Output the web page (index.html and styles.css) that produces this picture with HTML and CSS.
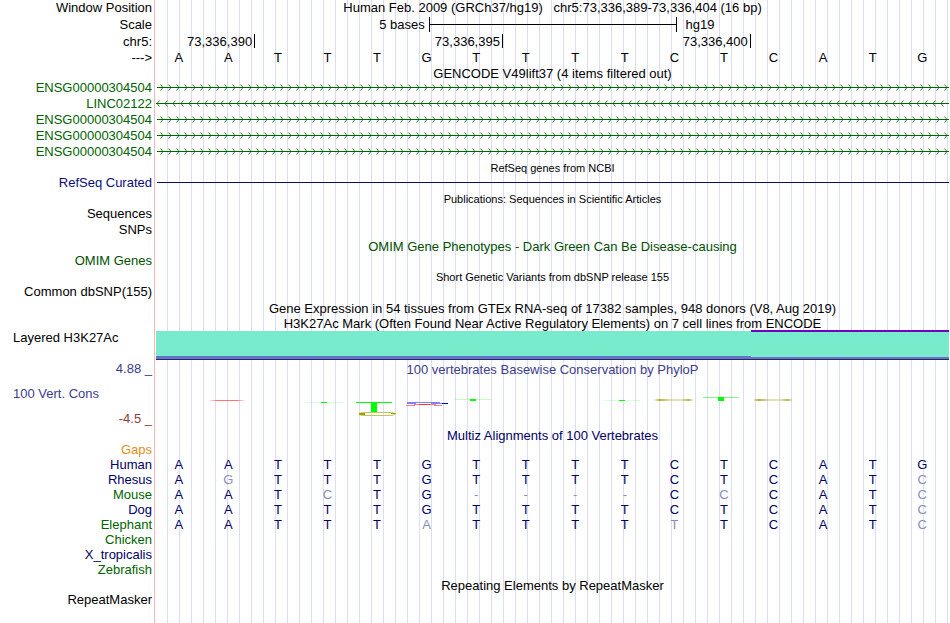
FILE: index.html
```html
<!DOCTYPE html>
<html lang="en">

<head>
    <meta charset="UTF-8">
    <meta name="viewport" content="width=device-width, initial-scale=1.0">
    <title>Human hg19 chr5:73,336,389-73,336,404</title>

    <link rel="stylesheet" href="styles.css">
</head>

<body>
    <main class="browser">
        <!-- ruler -->
        <div class="row ruler">
            <div class="label">Window Position</div>
            <div class="data position">Human Feb. 2009 (GRCh37/hg19)   chr5:73,336,389-73,336,404 (16 bp)</div>
        </div>
        <div class="row ruler">
            <div class="label">Scale</div>
            <div class="data scale">
                <span class="scale-size">5 bases</span>
                <span class="scale-bar"></span>
                <span class="scale-db">hg19</span>
            </div>
        </div>
        <div class="row">
            <div class="label">chr5:</div>
            <div class="data ticks">
                <span class="tick first">73,336,390</span>
                <span class="tick">73,336,395</span>
                <span class="tick">73,336,400</span>
            </div>
        </div>
        <div class="row short">
            <div class="label">---&gt;</div>
            <div class="data bases">
                <span>A</span><span>A</span><span>T</span><span>T</span><span>T</span><span>G</span><span>T</span><span>T</span><span>T</span><span>T</span><span>C</span><span>T</span><span>C</span><span>A</span><span>T</span><span>G</span>
            </div>
        </div>

        <!-- genes -->
        <div class="title">GENCODE V49lift37 (4 items filtered out)</div>
        <div class="row green">
            <div class="label">ENSG00000304504</div>
            <svg class="data gene">
                <defs>
                    <pattern id="forward" width="8" height="16" patternUnits="userSpaceOnUse">
                        <path d="M4.500 4.500L7 7.500L4.500 10.500" />
                    </pattern>
                    <pattern id="reverse" width="8" height="16" patternUnits="userSpaceOnUse">
                        <path d="M3.500 4.500L1 7.500L3.500 10.500" />
                    </pattern>
                </defs>
                <rect class="intron" x="1" y="7" width="100%" height="1" />
                <rect width="100%" height="16" fill="url(#forward)" />
            </svg>
        </div>
        <div class="row green">
            <div class="label">LINC02122</div>
            <svg class="data gene">
                <rect class="intron" y="7" width="100%" height="1" />
                <rect width="100%" height="16" fill="url(#reverse)" />
            </svg>
        </div>
        <div class="row green">
            <div class="label">ENSG00000304504</div>
            <svg class="data gene">
                <rect class="intron" x="1" y="7" width="100%" height="1" />
                <rect width="100%" height="16" fill="url(#forward)" />
            </svg>
        </div>
        <div class="row green">
            <div class="label">ENSG00000304504</div>
            <svg class="data gene">
                <rect class="intron" x="1" y="7" width="100%" height="1" />
                <rect width="100%" height="16" fill="url(#forward)" />
            </svg>
        </div>
        <div class="row green">
            <div class="label">ENSG00000304504</div>
            <svg class="data gene">
                <rect class="intron" x="1" y="7" width="100%" height="1" />
                <rect width="100%" height="16" fill="url(#forward)" />
            </svg>
        </div>

        <div class="title small">RefSeq genes from NCBI</div>
        <div class="row blue">
            <div class="label">RefSeq Curated</div>
            <svg class="data gene">
                <rect class="refseq" x="1" y="7" width="100%" height="1" />
            </svg>
        </div>

        <div class="title small">Publications: Sequences in Scientific Articles</div>
        <div class="row">
            <div class="label">Sequences</div>
        </div>
        <div class="row">
            <div class="label">SNPs</div>
        </div>

        <div class="title omim">OMIM Gene Phenotypes - Dark Green Can Be Disease-causing</div>
        <div class="row omim">
            <div class="label">OMIM Genes</div>
        </div>

        <div class="title small">Short Genetic Variants from dbSNP release 155</div>
        <div class="row">
            <div class="label">Common dbSNP(155)</div>
        </div>

        <div class="title">Gene Expression in 54 tissues from GTEx RNA-seq of 17382 samples, 948 donors (V8, Aug 2019)</div>
        <div class="title">H3K27Ac Mark (Often Found Near Active Regulatory Elements) on 7 cell lines from ENCODE</div>
        <div class="row h3k">
            <div class="label left">Layered H3K27Ac</div>
            <div class="data layers">
                <div class="layer low"></div>
                <div class="layer high"></div>
            </div>
        </div>

        <!-- conservation -->
        <div class="row cons">
            <div class="label cons-labels">
                <span>4.88 _</span>
                <span class="cons-name">100 Vert. Cons</span>
                <span class="cons-min">-4.5 _</span>
            </div>
            <div class="data">
                <div class="cons-title">100 vertebrates Basewise Conservation by PhyloP</div>
                <svg class="phylop" viewBox="0 0 793 51" preserveAspectRatio="none">
                    <defs>
                        <linearGradient id="redFade">
                            <stop offset="0" stop-color="#ff5050" stop-opacity="0" />
                            <stop offset=".25" stop-color="#ff5050" stop-opacity=".8" />
                            <stop offset=".75" stop-color="#ff5050" stop-opacity=".8" />
                            <stop offset="1" stop-color="#ff5050" stop-opacity="0" />
                        </linearGradient>
                        <linearGradient id="oliveFade">
                            <stop offset="0" stop-color="#a0a000" stop-opacity=".2" />
                            <stop offset=".12" stop-color="#a0a000" stop-opacity=".8" />
                            <stop offset=".4" stop-color="#a0a000" stop-opacity=".3" />
                            <stop offset=".7" stop-color="#a0a000" stop-opacity=".3" />
                            <stop offset=".88" stop-color="#a0a000" stop-opacity=".7" />
                            <stop offset="1" stop-color="#a0a000" stop-opacity=".2" />
                        </linearGradient>
                    </defs>
                    <rect x="52" y="24" width="38" height="1" fill="url(#redFade)" />
                    <g fill="#00ff00">
                        <rect x="150" y="26" width="36" height="1" opacity=".15" />
                        <rect x="165" y="26" width="6" height="1" />
                        <rect x="200" y="26" width="36" height="1" />
                        <rect x="215" y="27" width="6" height="9" />
                        <rect x="299" y="23" width="36" height="1" opacity=".25" />
                        <rect x="314" y="23" width="6" height="2" />
                        <rect x="448" y="24" width="36" height="1" opacity=".15" />
                        <rect x="463" y="24" width="6" height="1" />
                        <rect x="547" y="21" width="36" height="1" opacity=".5" />
                        <rect x="562" y="21" width="6" height="4" />
                    </g>
                    <path d="M234 36.500H210Q203 36.500 203 38Q203 39.500 210 39.500H232Q239 39.500 239 38Q239 36.500 232 36.500" fill="none" stroke="#c3c35a" />
                    <path d="M203 37h6v2h-6zM235 37h5v1h-5z" fill="#a0a000" />
                    <path d="M251 26.500H284M251 27.500H260M275 27.500H290" stroke="#8080ff" />
                    <path d="M286 27.500H292" stroke="#0000d0" />
                    <path d="M250 29.500H259M278 29.500H286M258 28.500H280" stroke="#ff8080" />
                    <path d="M263 28.500H274" stroke="#ff3030" />
                    <rect x="499" y="23" width="38" height="2" fill="url(#oliveFade)" />
                    <rect x="598" y="23" width="38" height="2" fill="url(#oliveFade)" />
                </svg>
            </div>
        </div>

        <!-- alignment -->
        <div class="title navy">Multiz Alignments of 100 Vertebrates</div>
        <div class="row short gaps">
            <div class="label">Gaps</div>
        </div>
        <div class="row short navy">
            <div class="label">Human</div>
            <div class="data bases">
                <span>A</span><span>A</span><span>T</span><span>T</span><span>T</span><span>G</span><span>T</span><span>T</span><span>T</span><span>T</span><span>C</span><span>T</span><span>C</span><span>A</span><span>T</span><span>G</span>
            </div>
        </div>
        <div class="row short navy">
            <div class="label">Rhesus</div>
            <div class="data bases">
                <span>A</span><span class="diff">G</span><span>T</span><span>T</span><span>T</span><span>G</span><span>T</span><span>T</span><span>T</span><span>T</span><span>C</span><span>T</span><span>C</span><span>A</span><span>T</span><span class="diff">C</span>
            </div>
        </div>
        <div class="row short navy">
            <div class="label green">Mouse</div>
            <div class="data bases">
                <span>A</span><span>A</span><span>T</span><span class="diff">C</span><span>T</span><span>G</span><span class="diff">-</span><span class="diff">-</span><span class="diff">-</span><span class="diff">-</span><span>C</span><span class="diff">C</span><span>C</span><span>A</span><span>T</span><span class="diff">C</span>
            </div>
        </div>
        <div class="row short navy">
            <div class="label">Dog</div>
            <div class="data bases">
                <span>A</span><span>A</span><span>T</span><span>T</span><span>T</span><span>G</span><span>T</span><span>T</span><span>T</span><span>T</span><span>C</span><span>T</span><span>C</span><span>A</span><span>T</span><span class="diff">C</span>
            </div>
        </div>
        <div class="row short navy">
            <div class="label green">Elephant</div>
            <div class="data bases">
                <span>A</span><span>A</span><span>T</span><span>T</span><span>T</span><span class="diff">A</span><span>T</span><span>T</span><span>T</span><span>T</span><span class="diff">T</span><span>T</span><span>C</span><span>A</span><span>T</span><span class="diff">C</span>
            </div>
        </div>
        <div class="row short">
            <div class="label green">Chicken</div>
        </div>
        <div class="row short navy">
            <div class="label">X_tropicalis</div>
        </div>
        <div class="row short">
            <div class="label green">Zebrafish</div>
        </div>

        <div class="title">Repeating Elements by RepeatMasker</div>
        <div class="row">
            <div class="label">RepeatMasker</div>
        </div>
    </main>
</body>

</html>
```

FILE: styles.css
```css
* {
    box-sizing: border-box;
}

body {
    margin: 0;
    background-color: white;
    color: black;
    font-family: "Liberation Sans", Arial, Helvetica, sans-serif;
    font-size: 13px;
    line-height: 16px;
}

/* red edge of the label column, then a guide line every 12px */
.browser {
    min-height: 100vh;
    padding-right: 1px;
    background:
        linear-gradient(#ffb4b4, #ffb4b4) 154px 0 / 1px 100% no-repeat,
        repeating-linear-gradient(to right, transparent 0 11px, #dcdcf5 11px 12px) 156px 0 no-repeat;
}

.row {
    display: grid;
    grid-template-columns: 152px 1fr;
    column-gap: 4px;
    height: 16px;
    white-space: nowrap;
}

.row.ruler {
    height: 17px;
}

.row.short {
    height: 15px;
    line-height: 15px;
}

.label {
    text-align: right;
}

.label.left {
    padding-left: 13px;
    text-align: left;
}

.title {
    height: 15px;
    margin-left: 156px;
    padding-top: 1px;
    line-height: 15px;
    text-align: center;
    white-space: nowrap;
}

.title.small {
    font-size: 11px;
}

/* colors */
.green {
    color: #006400;
}

.blue {
    color: #0c0c78;
}

.omim {
    color: #005000;
}

.navy {
    color: #000064;
}

.gaps {
    color: #e68c14;
}

.diff {
    color: #8c8cb9;
}

/* ruler */
.position {
    text-align: center;
    white-space: pre;
}

.scale {
    display: grid;
    grid-template-columns: 34.4% 31.25% 1fr;
}

.scale-size {
    padding-right: 4px;
    text-align: right;
}

.scale-bar {
    height: 15px;
    border: solid black;
    border-width: 0 1px;
    background: linear-gradient(black, black) 0 7px / 100% 1px no-repeat;
}

.scale-db {
    padding-left: 9px;
}

.ticks,
.bases {
    display: grid;
    grid-template-columns: repeat(16, 1fr);
}

.tick {
    grid-column: span 5;
    height: 14px;
    padding-right: 2px;
    border-right: 1px solid black;
    text-align: right;
}

.tick.first {
    grid-column: span 2;
}

.bases {
    margin: 0 2px 0 -2px;
    text-align: center;
}

/* genes */
.gene {
    width: 100%;
    height: 16px;
}

.gene path {
    fill: none;
    stroke: #006400;
    stroke-width: .8;
}

.intron {
    fill: #006400;
}

.refseq {
    fill: #0c0c78;
}

/* histone marks */
.row.h3k {
    height: 31px;
}

.layers {
    display: grid;
    grid-template-columns: 3fr 1fr;
    height: 30px;
    border-bottom: 1px solid #28285a;
}

.layer {
    background-color: #78ebcd;
}

.layer.low {
    margin-top: 1px;
    border-bottom: 3px solid #6473cd;
}

.layer.high {
    border-top: 2px solid #7300c8;
    border-bottom: 2px solid #6473cd;
}

/* conservation */
.row.cons {
    height: 66px;
    color: #3c3c8c;
}

.cons-labels {
    display: flex;
    flex-direction: column;
    justify-content: space-between;
}

.cons-name {
    padding-left: 13px;
    text-align: left;
}

.cons-min {
    color: #8c3c3c;
}

.cons-title {
    height: 15px;
    padding-top: 1px;
    line-height: 15px;
    text-align: center;
}

.phylop {
    display: block;
    width: 100%;
    height: 51px;
}
```
